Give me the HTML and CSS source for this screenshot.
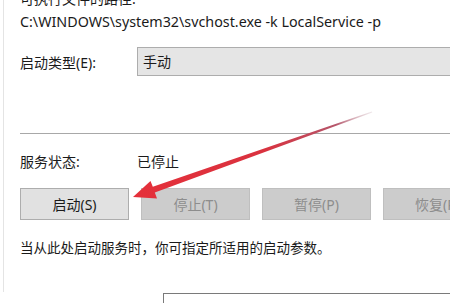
FILE: index.html
```html
<!DOCTYPE html>
<html lang="zh-CN">
<head>
    <meta charset="UTF-8">
    <meta name="viewport" content="width=device-width, initial-scale=1.0">
    <title>服务属性</title>
    <link rel="stylesheet" href="styles.css">
</head>
<body>
    <div class="dialog">
        <div class="label-top">可执行文件的路径:</div>
        <div class="path">C:\WINDOWS\system32\svchost.exe -k LocalService -p</div>
        <div class="field">
            <span class="field-label">启动类型(E):</span>
            <div class="select">手动</div>
        </div>
        <div class="sep"></div>
        <div class="field status">
            <span class="field-label">服务状态:</span>
            <span>已停止</span>
        </div>
        <div class="buttons">
            <button class="btn">启动(S)</button>
            <button class="btn" disabled>停止(T)</button>
            <button class="btn" disabled>暂停(P)</button>
            <button class="btn" disabled>恢复(R)</button>
        </div>
        <p class="hint">当从此处启动服务时，你可指定所适用的启动参数。</p>
        <div class="params">
            <div class="params-box"></div>
        </div>
    </div>

    <svg class="arrow" width="450" height="303" viewBox="0 0 450 303">
        <defs>
            <linearGradient id="redfade" x1="133" y1="197" x2="372" y2="112" gradientUnits="userSpaceOnUse">
                <stop offset="0" stop-color="#e5303a"/>
                <stop offset="0.55" stop-color="#d9323f"/>
                <stop offset="0.85" stop-color="#b5556a"/>
                <stop offset="1" stop-color="#d8c6cc" stop-opacity="0.4"/>
            </linearGradient>
        </defs>
        <polygon fill="url(#redfade)"
                 points="133,197 150.5,181 152.8,186.8 371.8,111.4 372.3,112.6 154.8,192.6 157,198.5"/>
    </svg>
</body>
</html>
```

FILE: styles.css
```css
* {
    box-sizing: border-box;
}
body {
    margin: 0;
    padding: 0 0 0 3px;
    background: white;
    font-family: "Noto Sans", "Noto Sans CJK SC", sans-serif;
    font-size: 14px;
    color: #1a1a1a;
    overflow: hidden;
    height: 303px;
}
.dialog {
    border-left: 1px solid #e4e4e4;
    padding-left: 16px;
    height: 303px;
}
.label-top {
    height: 20px;
    line-height: 20px;
    margin-top: -11px;
}
.path {
    margin-top: 3px;
    height: 20px;
    line-height: 20px;
    font-size: 14.3px;
    white-space: nowrap;
}
.field {
    display: flex;
    align-items: center;
    margin-top: 15px;
    height: 29px;
}
.field-label {
    width: 117px;
    flex-shrink: 0;
}
.select {
    flex-grow: 1;
    height: 29px;
    line-height: 27px;
    padding-left: 5px;
    background: #e5e5e5;
    border: 1px solid #adadad;
    border-right: none;
}
.sep {
    margin-top: 57px;
    height: 1px;
    background: #a8a8a8;
}
.status {
    margin-top: 18px;
    height: 18px;
}
.buttons {
    display: flex;
    gap: 12px;
    margin-top: 18px;
    height: 32px;
}
.btn {
    width: 109px;
    flex-shrink: 0;
    height: 32px;
    padding: 0;
    font-family: inherit;
    font-size: 14px;
    color: #1a1a1a;
    background: #e1e1e1;
    border: 1px solid #adadad;
}
.btn:disabled {
    color: #8d8d8d;
    background: #cccccc;
    border-color: #bfbfbf;
}
.hint {
    margin: 19px 0 0;
    height: 18px;
    line-height: 18px;
    font-size: 13.5px;
    white-space: nowrap;
}
.params {
    margin-top: 36px;
    padding-left: 143px;
}
.params-box {
    height: 20px;
    border-top: 1px solid #7a7a7a;
    border-left: 1px solid #7a7a7a;
}
.arrow {
    position: absolute;
    left: 0;
    top: 0;
    pointer-events: none;
}
```
